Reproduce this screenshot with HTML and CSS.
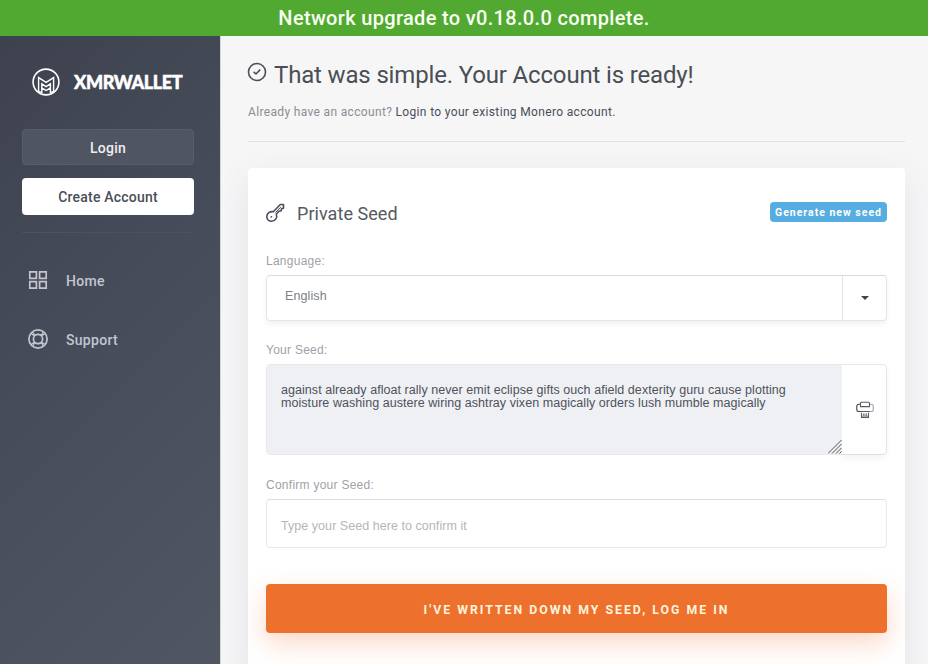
FILE: index.html
```
<!DOCTYPE html>
<html lang="en">
<head>
<meta charset="utf-8">
<title>XMRWallet</title>
<link rel="stylesheet" href="styles.css">
</head>
<body>
<div class="banner"><span>Network upgrade to v0.18.0.0 complete.</span></div>
<div class="layout">
  <aside class="sidebar">
    <div class="brand">
      <svg class="brand-mark" viewBox="0 0 28 28" fill="none" stroke="#fff" stroke-width="1.6">
        <circle cx="14" cy="14" r="12.9"/>
        <path d="M6.600 23.400V9.600l7.500 4.700 7.500-4.700v13.800M6.600 23.400l3.200 1.200v-8.800l4.300 2.900 4.300-2.900v8.800l3.200-1.200M9.800 19.800l4.300 2.700 4.300-2.700" stroke-width="1.4"/>
      </svg>
      <span class="brand-name">XMRWALLET</span>
    </div>
    <a class="side-btn side-btn-dim"><span>Login</span></a>
    <a class="side-btn side-btn-solid"><span>Create Account</span></a>
    <nav class="nav">
      <a class="nav-item">
        <svg viewBox="0 0 20 20" fill="none" stroke="currentColor" stroke-width="1.7"><path d="M1.800 1.800h6.600v6.600H1.800zM11.600 1.800h6.600v6.600h-6.600zM1.800 11.600h6.600v6.600H1.800zM11.600 11.600h6.600v6.600h-6.600z"/></svg>
        <span>Home</span>
      </a>
      <a class="nav-item">
        <svg viewBox="0 0 20 20" fill="none" stroke="currentColor" stroke-width="1.7"><circle cx="10" cy="10" r="9.100"/><circle cx="10" cy="10" r="4.600"/><path d="M4.500 3l2.200 3.200a7.500 7.500 0 0 1 6.600 0L15.500 3M4.500 17l2.200-3.200a7.500 7.500 0 0 0 6.600 0l2.200 3.200M3 4.500l3.200 2.200M3 15.500l3.200-2.200M17 4.500l-3.200 2.200M17 15.500l-3.200-2.200" stroke-width="1.300"/></svg>
        <span>Support</span>
      </a>
    </nav>
  </aside>
  <main class="main">
    <header class="head">
      <h1>
        <svg viewBox="0 0 20 20" fill="none" stroke="currentColor" stroke-width="1.6"><circle cx="10" cy="10" r="8.500"/><path d="M6.600 9.800l2.400 2.200 4.200-4.400"/></svg>
        <span>That was simple. Your Account is ready!</span>
      </h1>
      <p><span class="muted">Already have an account? </span><a>Login to your existing Monero account.</a></p>
    </header>
    <section class="card">
      <div class="card-head">
        <svg class="key" viewBox="0 0 20 20" fill="none" stroke="currentColor" stroke-width="1.6" stroke-linejoin="round"><path d="M8.300 8.700L15.300 1.500h3.200v3.700l-2 .5-.4 2.100-2.200.5-2.600 2.900c1.300 3.200-.9 7.100-4.600 7.100-2.900 0-4.900-2.100-4.900-4.700C1.800 10.300 5 8.200 8.300 8.700z"/><path d="M15.800 4.100l-5.400 5.600" stroke-width="1"/><circle cx="6.300" cy="13.800" r=".9" fill="currentColor" stroke="none"/></svg>
        <h2>Private Seed</h2>
        <button class="tag">Generate new seed</button>
      </div>
      <label class="lbl">Language:</label>
      <div class="select"><span class="select-value">English</span><span class="select-arrow"><i></i></span></div>
      <label class="lbl lbl-seed">Your Seed:</label>
      <div class="seed">
        <div class="seed-text"><div>against already afloat rally never emit eclipse gifts ouch afield dexterity guru cause plotting</div><div>moisture washing austere wiring ashtray vixen magically orders lush mumble magically</div>
          <svg class="grip" viewBox="0 0 14 14" stroke="#555" stroke-width="1"><path d="M0 13.500L13.500 0M4 13.500L13.500 4M8 13.500L13.500 8M11.500 13.500l2-2"/></svg>
        </div>
        <button class="print"><svg viewBox="0 0 18 18" fill="none" stroke="#5a5d65" stroke-width="1.100"><path d="M4.500 10.500H2.500c-1 0-1.700-.7-1.700-1.700V5.200c0-1.200.9-2 2.200-2h1.500" stroke="#3f424a"/><path d="M13.500 3.200H15c1.300 0 2.200.8 2.200 2v3.600c0 1-.7 1.700-1.700 1.700h-2" stroke="#a0a3a8"/><path d="M4.500 5.600V2.200c0-.6.4-1 1-1h7c.6 0 1 .4 1 1v3.400zM4 10.500h10M5.500 11.800v4.700h7v-4.700"/><path d="M7.500 12.500v2.500M9 12.500v2.500M10.500 12.500v2.500M6 15.300h6" stroke="#85888e"/></svg></button>
      </div>
      <label class="lbl lbl-confirm">Confirm your Seed:</label>
      <div class="input"><span>Type your Seed here to confirm it</span></div>
      <button class="submit">I'VE WRITTEN DOWN MY SEED, LOG ME IN</button>
    </section>
  </main>
</div>
</body>
</html>
```
FILE: styles.css
```
* { box-sizing: border-box; }
html, body { margin: 0; height: 664px; overflow: hidden; }
body { font-family: Roboto, "Liberation Sans", sans-serif; color: #4a4e59; background: #f6f6f7; display: flex; flex-direction: column; }
svg { display: block; flex: none; }
button { font-family: inherit; border: 0; padding: 0; }
.banner { flex: none; height: 36px; background: #51a931; color: #f8fff2; font-size: 20px; font-weight: 500; line-height: 36px; text-align: center; letter-spacing: .33px; }
.layout { flex: 1; min-height: 0; display: flex; }
.sidebar { width: 220px; flex: none; padding: 31px 26px 0 22px; background: linear-gradient(135deg, #3e424e 0%, #464c5a 45%, #515663 100%); }
.brand { display: flex; align-items: center; height: 30px; padding-left: 10px; margin-bottom: 32px; }
.brand-mark { width: 28px; height: 28px; }
.brand-name { margin-left: 14px; color: #fff; font: 900 18px Lato, sans-serif; letter-spacing: -.35px; -webkit-text-stroke: .5px #fff; }
.side-btn { display: block; text-align: center; height: 36px; border-radius: 4px; font-size: 14px; font-weight: 500; letter-spacing: .2px; }
.side-btn-dim { background: #505562; color: #eeeef2; border: 1px solid #585d6a; line-height: 36px; }
.side-btn-solid { margin-top: 13px; height: 37px; line-height: 39px; background: #fff; color: #4a4e59; }
.nav { margin-top: 17px; padding: 18px 0 0 6px; border-top: 1px solid #4d525f; }
.nav-item { display: flex; align-items: center; height: 59px; color: #c3c5cf; font-size: 14px; font-weight: 500; letter-spacing: .3px; }
.nav-item svg { width: 20px; height: 20px; margin: -2px 18px 0 0; }
.main { flex: 1; padding: 0 23px 0 27px; border-left: 1px solid #d5d6da; overflow: hidden; }
.head { height: 106px; padding-top: 22px; border-bottom: 1px solid #dfe1e7; }
h1 { display: flex; margin: 0; font-size: 24px; font-weight: 400; line-height: 34px; letter-spacing: -.16px; color: #4a4e55; }
h1 svg { width: 20px; height: 20px; margin: 4px 7px 0 -1px; }
.head p { margin: 12px 0 0; font-size: 12px; line-height: 16px; letter-spacing: .34px; color: #4a4e59; white-space: nowrap; }
.muted { color: #8b8d94; }
.card { margin-top: 26px; height: 540px; background: #fff; border-radius: 4px; padding: 29px 18px 0; box-shadow: 0 10px 32px rgba(70, 75, 120, .1); display: flex; flex-direction: column; }
.card-head { display: flex; align-items: center; height: 32px; }
.key { width: 20px; height: 20px; margin: -1px 0 0 -1px; }
h2 { margin: 0 auto 0 12px; font-size: 18px; font-weight: 400; letter-spacing: .05px; color: #555962; }
.tag { width: 117px; height: 20px; margin-bottom: 2px; background: #55ade1; color: #fff; border-radius: 4px; font-size: 10.5px; font-weight: 700; letter-spacing: 1px; white-space: nowrap; }
.lbl { font: 12px/16px "Liberation Sans", sans-serif; color: #a0a2a7; letter-spacing: .26px; margin-top: 24px; }
.select { display: flex; height: 46px; margin-top: 6px; border: 1px solid #e4e5e9; border-top-color: #d9dade; border-radius: 4px; box-shadow: 0 3px 5px rgba(60, 65, 90, .07); font: 12.5px "Liberation Sans", sans-serif; letter-spacing: .1px; color: #7d8087; }
.select-value { flex: 1; padding: 13px 0 0 18px; }
.select-arrow { width: 44px; border-left: 1px solid #e0e2e8; display: flex; align-items: center; justify-content: center; }
.select-arrow i { border: 4px solid transparent; border-top-color: #42454c; border-bottom: 0; }
.lbl-seed { margin-top: 21px; }
.seed { display: flex; height: 91px; margin-top: 6px; border: 1px solid #e8e9ec; border-radius: 4px; }
.seed-text { position: relative; flex: 1; padding: 19px 0 0 14px; background: #eff0f4; border-radius: 3px 0 0 3px; font: 12.5px/13px "Liberation Sans", sans-serif; letter-spacing: .055px; color: #4e525b; white-space: nowrap; }
.grip { position: absolute; right: 0; bottom: 0; width: 14px; height: 14px; }
.print { width: 44px; background: #fff; border-radius: 0 4px 4px 0; box-shadow: 0 4px 6px rgba(60, 65, 90, .07); display: flex; align-items: center; justify-content: center; }
.print svg { width: 18px; height: 18px; margin-left: 1px; }
.lbl-confirm { margin-top: 22px; }
.input { height: 49px; margin-top: 6px; padding: 18px 14px; border: 1px solid #e8e9ec; border-top-color: #dcdde0; border-radius: 4px; font: 12.5px/16px "Liberation Sans", sans-serif; letter-spacing: .05px; color: #b4b6ba; }
.submit { flex: none; height: 49px; margin-top: 36px; padding-top: 3px; background: #ed702d; color: #fff4dc; border-radius: 4px; font-size: 12.3px; font-weight: 700; letter-spacing: 2px; box-shadow: 0 10px 26px rgba(237, 112, 45, .28); }
```
